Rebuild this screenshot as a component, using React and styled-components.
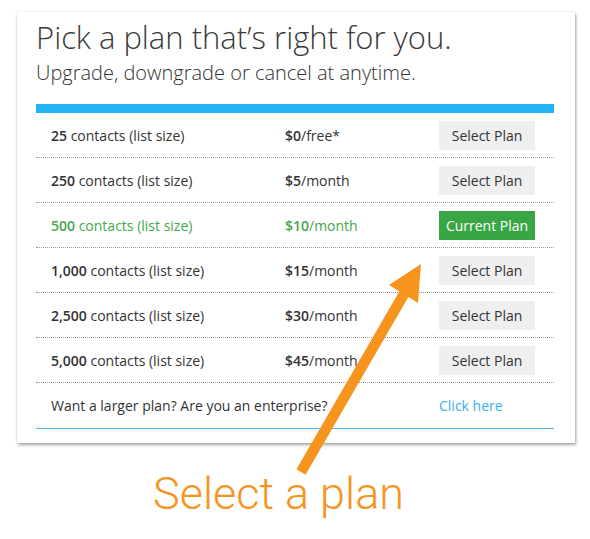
import React from "react";
import styled, { createGlobalStyle } from "styled-components";

const Global = createGlobalStyle`
  html, body { margin: 0; padding: 0; background: #fff; }
  body { font-family: "Open Sans", "Liberation Sans", sans-serif; color: #333; }
`;

const Page = styled.div`
  position: relative;
  width: 590px;
  height: 539px;
  padding: 12px 0 0 17px;
  box-sizing: border-box;
  overflow: hidden;
`;

const Card = styled.div`
  width: 558px;
  height: 431px;
  box-sizing: border-box;
  background: #fff;
  padding: 6px 21px 0 19px;
  box-shadow: 1px 2px 3px rgba(0, 0, 0, 0.35), 0 0 1px rgba(0, 0, 0, 0.2);
`;

const Title = styled.h1`
  margin: 0;
  font-size: 31px;
  line-height: 38px;
  font-weight: 300;
  color: #3a3a3a;
`;

const Subtitle = styled.p`
  margin: 4px 0 0;
  font-size: 20px;
  line-height: 26px;
  font-weight: 300;
  color: #333;
`;

const Bar = styled.div`
  margin-top: 18px;
  height: 9px;
  background: #20b4f7;
`;

const Row = styled.div`
  display: grid;
  grid-template-columns: 234px 154px 96px;
  align-items: center;
  height: ${(p) => (p.$last ? "46px" : "45px")};
  box-sizing: border-box;
  padding: 0 18px 0 15px;
  border-bottom: ${(p) => (p.$last ? "1px solid #4fb8f0" : "1px dotted #9a9a9a")};
  font-size: 14px;
  color: ${(p) => (p.$current ? "#43a84d" : "#333")};

  b {
    font-weight: 600;
  }
`;

const Cell = styled.span`
  white-space: nowrap;
`;

const Btn = styled.button`
  width: 96px;
  height: 29px;
  border: none;
  padding: 0;
  font-family: "Open Sans", "Liberation Sans", sans-serif;
  font-size: 14px;
  color: ${(p) => (p.$current ? "#fff" : "#333")};
  background: ${(p) => (p.$current ? "#39a646" : "#efefef")};
  cursor: pointer;
`;

const Link = styled.a`
  color: #3aaef3;
  text-decoration: none;
  font-size: 14px;
`;

const Caption = styled.div`
  margin: 25px 0 0 136px;
  font-family: Roboto, "Liberation Sans", sans-serif;
  font-weight: 300;
  font-size: 45px;
  line-height: 52px;
  color: #f7941e;
`;

const Overlay = styled.svg`
  position: absolute;
  left: 0;
  top: 0;
  pointer-events: none;
`;

const plans = [
  { n: "25", price: "$0", unit: "/free*" },
  { n: "250", price: "$5", unit: "/month" },
  { n: "500", price: "$10", unit: "/month", current: true },
  { n: "1,000", price: "$15", unit: "/month" },
  { n: "2,500", price: "$30", unit: "/month" },
  { n: "5,000", price: "$45", unit: "/month" },
];

export default function App() {
  return (
    <>
      <Global />
      <Page>
        <Card>
          <Title>Pick a plan that’s right for you.</Title>
          <Subtitle>Upgrade, downgrade or cancel at anytime.</Subtitle>
          <Bar />
          {plans.map((p) => (
            <Row key={p.n} $current={p.current}>
              <Cell>
                <b>{p.n}</b> contacts (list size)
              </Cell>
              <Cell>
                <b>{p.price}</b>
                {p.unit}
              </Cell>
              <Btn $current={p.current}>{p.current ? "Current Plan" : "Select Plan"}</Btn>
            </Row>
          ))}
          <Row $last>
            <Cell>Want a larger plan? Are you an enterprise?</Cell>
            <span />
            <Link href="#">Click here</Link>
          </Row>
        </Card>
        <Caption>Select a plan</Caption>
        <Overlay width="590" height="539" viewBox="0 0 590 539">
          <line x1="301" y1="472" x2="408" y2="287" stroke="#f7941e" strokeWidth="10.5" />
          <polygon points="421,264 389,285 418,303" fill="#f7941e" />
        </Overlay>
      </Page>
    </>
  );
}
